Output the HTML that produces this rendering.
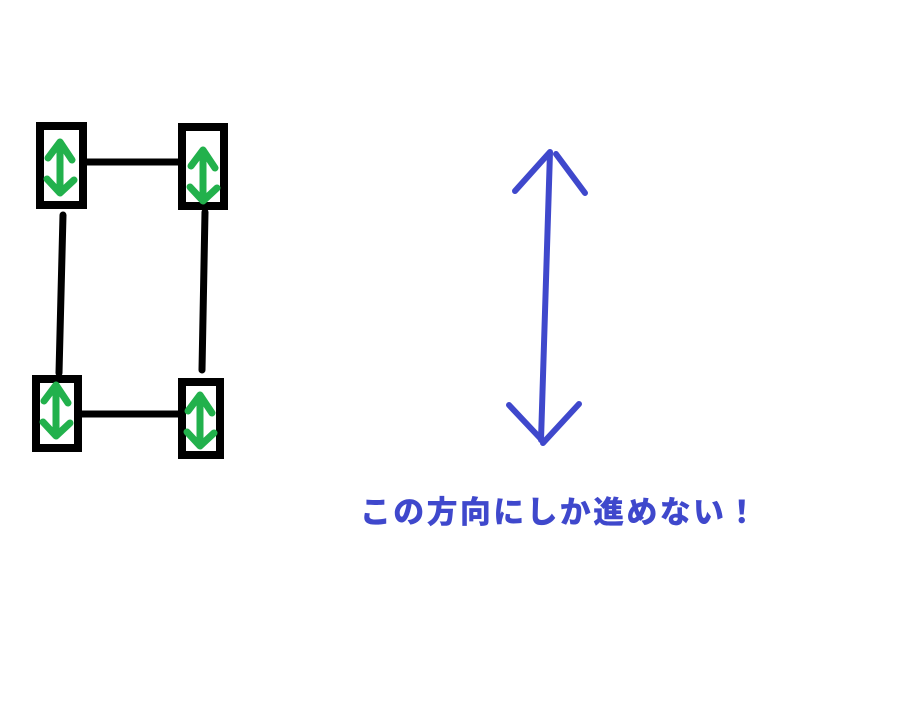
<!DOCTYPE html>
<html><head><meta charset="utf-8"><style>
html,body{margin:0;padding:0;background:#fff;width:903px;height:701px;overflow:hidden;position:relative}
.t{position:absolute;left:360px;top:493px;font-family:"Liberation Sans","Noto Sans CJK JP",sans-serif;font-weight:900;font-size:31px;line-height:40px;color:#3f48cc;white-space:nowrap;letter-spacing:2.3px}
</style></head><body>
<svg width="903" height="701" style="position:absolute;left:0;top:0">
<defs>
<g id="ga" fill="none" stroke="#22b14c" stroke-width="7" stroke-linecap="round" stroke-linejoin="round">
<path d="M0 -25 L0 25 M-12 -9 L0 -25 L12 -7 M-13 12 L0 26 L14 13"/>
</g>
</defs>
<g fill="none" stroke="#000" stroke-width="8">
<rect x="40" y="126" width="43" height="79"/>
<rect x="182" y="127" width="42" height="79"/>
<rect x="36" y="379" width="42" height="69"/>
<rect x="182" y="382" width="38" height="73"/>
</g>
<g stroke="#000" stroke-width="7" stroke-linecap="round">
<line x1="87" y1="162" x2="178" y2="162"/>
<line x1="82" y1="414" x2="178" y2="414"/>
<line x1="63" y1="215" x2="59" y2="373"/>
<line x1="205" y1="212" x2="202" y2="370"/>
</g>
<use href="#ga" x="60" y="167"/>
<use href="#ga" x="203" y="175"/>
<use href="#ga" x="56" y="410"/>
<use href="#ga" x="200" y="420"/>
<g fill="none" stroke="#3f48cc" stroke-width="6" stroke-linecap="round" stroke-linejoin="round">
<path d="M550 152 L541 440 M515 191 L550 152 M556 154 L585 193 M509 405 L540 438 M579 404 L543 443"/>
</g>
</svg>
<div class="t">この方向にしか進めない！</div>
</body></html>
